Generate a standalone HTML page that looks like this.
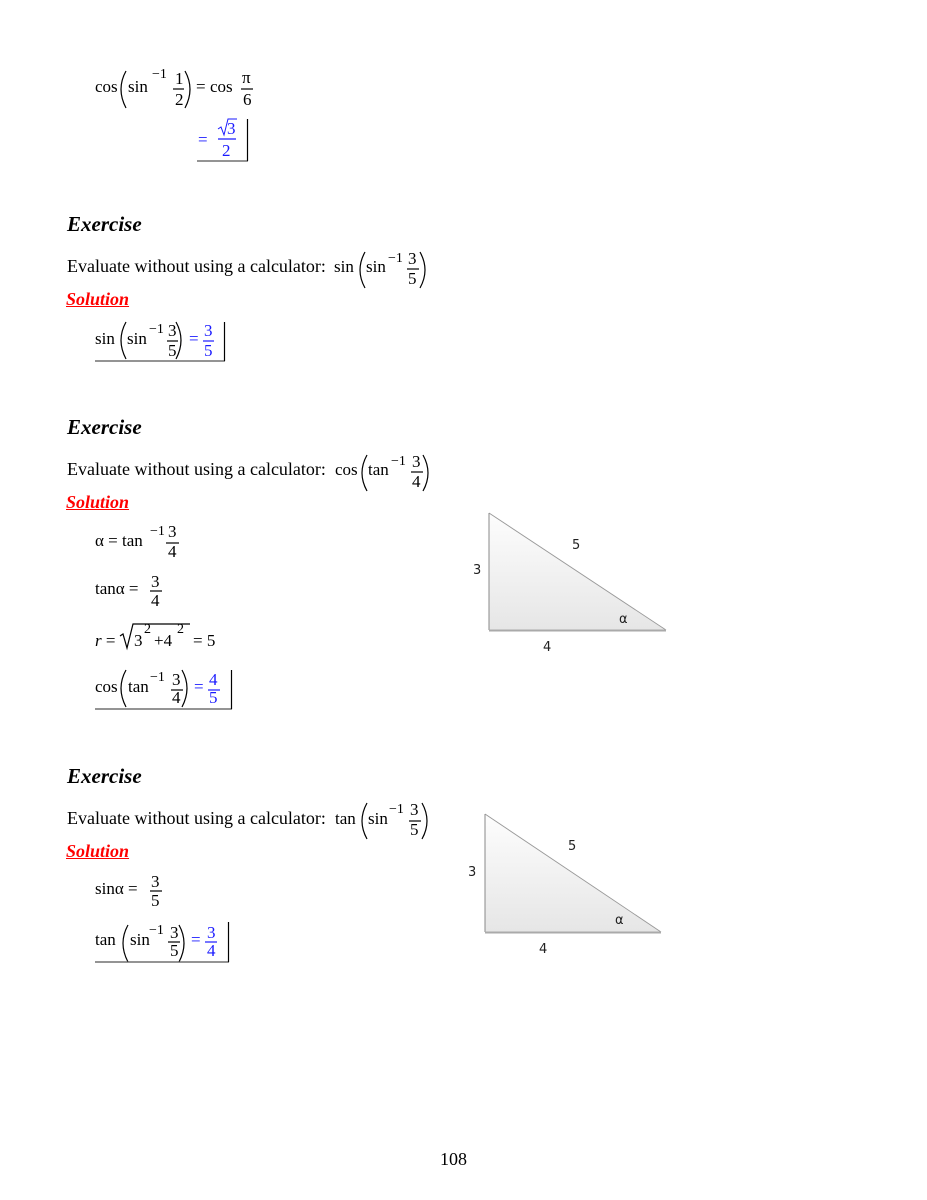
<!DOCTYPE html>
<html><head><meta charset="utf-8"><style>
html,body{margin:0;padding:0;background:#fff;}
body{width:927px;height:1200px;position:relative;overflow:hidden;font-family:"Liberation Serif",serif;color:#000;}
.t{position:absolute;font-size:17px;line-height:17px;white-space:nowrap;}
.e{position:absolute;font-size:18px;line-height:18px;white-space:nowrap;}
.s{position:absolute;font-size:14px;line-height:14px;white-space:nowrap;}
.b{color:#1a1aff;}
.h{position:absolute;font-size:21px;line-height:21px;font-weight:bold;font-style:italic;}
.sol{position:absolute;font-size:18px;line-height:18px;font-weight:bold;font-style:italic;color:#f00;text-decoration:underline;}
.l{position:absolute;font-family:"DejaVu Sans",sans-serif;font-size:13px;line-height:13px;color:#222;}
svg{position:absolute;left:0;top:0;}
</style></head><body>
<svg width="927" height="1200" fill="none" stroke="#000" stroke-width="1.2">
<path d="M126 71 Q116 89 126 108"/><path d="M185 71 Q195 89 185 108"/>
<line x1="173" y1="89" x2="184" y2="89"/><line x1="241" y1="89" x2="253" y2="89"/>
<line x1="218" y1="139" x2="236" y2="139" stroke="#1a1aff"/>
<path d="M218 129 l3 -2 l3 8 l4 -16 h9" stroke="#1a1aff" stroke-width="1"/>
<line x1="197" y1="161" x2="248" y2="161" stroke="#555"/><line x1="247.5" y1="119" x2="247.5" y2="161"/>
<path d="M365 252 Q355 270 365 288"/><path d="M420 252 Q430 270 420 288"/>
<line x1="407" y1="269" x2="419" y2="269"/>
<path d="M126 322 Q116 340 126 359"/><path d="M176 322 Q186 340 176 359"/>
<line x1="167" y1="341" x2="178" y2="341"/><line x1="203" y1="341" x2="214" y2="341" stroke="#1a1aff"/>
<line x1="95" y1="361" x2="225" y2="361" stroke="#555"/><line x1="224.5" y1="322" x2="224.5" y2="361"/>
<path d="M367 455 Q357 473 367 491"/><path d="M423 455 Q433 473 423 491"/>
<line x1="411" y1="472" x2="423" y2="472"/>
<line x1="166" y1="543" x2="179" y2="543"/><line x1="150" y1="591" x2="162" y2="591"/>
<path d="M120 636 l3 -2 l4 14 l6 -24 h57"/>
<path d="M126 670 Q116 688 126 707"/><path d="M182 670 Q192 688 182 707"/>
<line x1="171" y1="690" x2="183" y2="690"/><line x1="208" y1="690" x2="220" y2="690" stroke="#1a1aff"/>
<line x1="95" y1="709" x2="232" y2="709" stroke="#555"/><line x1="231.5" y1="670" x2="231.5" y2="709"/>
<path d="M367 803 Q357 821 367 839"/><path d="M422 803 Q432 821 422 839"/>
<line x1="409" y1="821" x2="421" y2="821"/>
<line x1="150" y1="891" x2="162" y2="891"/>
<path d="M128 925 Q118 943 128 962"/><path d="M179 925 Q189 943 179 962"/>
<line x1="168" y1="942" x2="180" y2="942"/><line x1="205" y1="942" x2="217" y2="942" stroke="#1a1aff"/>
<line x1="95" y1="962" x2="229" y2="962" stroke="#555"/><line x1="228.5" y1="922" x2="228.5" y2="962"/>
<defs><linearGradient id="g" x1="0" y1="0" x2="0" y2="1"><stop offset="0" stop-color="#fdfdfd"/><stop offset="1" stop-color="#e6e6e6"/></linearGradient></defs>
<path d="M489 513 L489 630 L666 630 Z" fill="url(#g)" stroke="none"/>
<path d="M489 513 L489 630" stroke="#888" stroke-width="1"/><path d="M489 513 L666 630" stroke="#999" stroke-width="0.9"/><path d="M489 630.5 L666 630.5" stroke="#aaa" stroke-width="2"/>
<path d="M485 814 L485 932 L661 932 Z" fill="url(#g)" stroke="none"/>
<path d="M485 814 L485 932" stroke="#888" stroke-width="1"/><path d="M485 814 L661 932" stroke="#999" stroke-width="0.9"/><path d="M485 932.5 L661 932.5" stroke="#aaa" stroke-width="2"/>
</svg>

<span class="t" style="left:95px;top:78px">cos</span>
<span class="t" style="left:128px;top:78px">sin</span>
<span class="s" style="left:152px;top:68px">&minus;1</span>
<span class="t" style="left:175px;top:70px">1</span>
<span class="t" style="left:175px;top:91px">2</span>
<span class="t" style="left:196px;top:78px">=</span>
<span class="t" style="left:210px;top:78px">cos</span>
<span class="t" style="left:242px;top:69px">&pi;</span>
<span class="t" style="left:243px;top:91px">6</span>
<span class="t b" style="left:198px;top:131px">=</span>
<span class="t b" style="left:227px;top:120px">3</span>
<span class="t b" style="left:222px;top:142px">2</span>

<div class="h" style="left:67px;top:214px">Exercise</div>
<span class="e" style="left:67px;top:257px">Evaluate without using a calculator:</span>
<span class="t" style="left:334px;top:258px">sin</span>
<span class="t" style="left:366px;top:258px">sin</span>
<span class="s" style="left:388px;top:252px">&minus;1</span>
<span class="t" style="left:408px;top:250px">3</span>
<span class="t" style="left:408px;top:270px">5</span>
<div class="sol" style="left:66px;top:290px">Solution</div>
<span class="t" style="left:95px;top:330px">sin</span>
<span class="t" style="left:127px;top:330px">sin</span>
<span class="s" style="left:149px;top:323px">&minus;1</span>
<span class="t" style="left:168px;top:322px">3</span>
<span class="t" style="left:168px;top:342px">5</span>
<span class="t b" style="left:189px;top:330px">=</span>
<span class="t b" style="left:204px;top:322px">3</span>
<span class="t b" style="left:204px;top:342px">5</span>

<div class="h" style="left:67px;top:417px">Exercise</div>
<span class="e" style="left:67px;top:460px">Evaluate without using a calculator:</span>
<span class="t" style="left:335px;top:461px">cos</span>
<span class="t" style="left:368px;top:461px">tan</span>
<span class="s" style="left:391px;top:455px">&minus;1</span>
<span class="t" style="left:412px;top:453px">3</span>
<span class="t" style="left:412px;top:473px">4</span>
<div class="sol" style="left:66px;top:493px">Solution</div>
<span class="t" style="left:95px;top:532px">&alpha; = tan</span>
<span class="s" style="left:150px;top:525px">&minus;1</span>
<span class="t" style="left:168px;top:523px">3</span>
<span class="t" style="left:168px;top:543px">4</span>
<span class="t" style="left:95px;top:580px">tan&alpha; =</span>
<span class="t" style="left:151px;top:573px">3</span>
<span class="t" style="left:151px;top:592px">4</span>
<span class="t" style="left:95px;top:632px"><i>r</i> =</span>
<span class="t" style="left:134px;top:632px">3</span>
<span class="s" style="left:144px;top:623px">2</span>
<span class="t" style="left:154px;top:632px">+4</span>
<span class="s" style="left:177px;top:623px">2</span>
<span class="t" style="left:193px;top:632px">= 5</span>
<span class="t" style="left:95px;top:678px">cos</span>
<span class="t" style="left:128px;top:678px">tan</span>
<span class="s" style="left:150px;top:671px">&minus;1</span>
<span class="t" style="left:172px;top:671px">3</span>
<span class="t" style="left:172px;top:689px">4</span>
<span class="t b" style="left:194px;top:678px">=</span>
<span class="t b" style="left:209px;top:671px">4</span>
<span class="t b" style="left:209px;top:689px">5</span>
<span class="l" style="left:572px;top:539px">5</span>
<span class="l" style="left:473px;top:564px">3</span>
<span class="l" style="left:619px;top:613px">&alpha;</span>
<span class="l" style="left:543px;top:641px">4</span>

<div class="h" style="left:67px;top:766px">Exercise</div>
<span class="e" style="left:67px;top:809px">Evaluate without using a calculator:</span>
<span class="t" style="left:335px;top:810px">tan</span>
<span class="t" style="left:368px;top:810px">sin</span>
<span class="s" style="left:389px;top:803px">&minus;1</span>
<span class="t" style="left:410px;top:801px">3</span>
<span class="t" style="left:410px;top:821px">5</span>
<div class="sol" style="left:66px;top:842px">Solution</div>
<span class="t" style="left:95px;top:880px">sin&alpha; =</span>
<span class="t" style="left:151px;top:873px">3</span>
<span class="t" style="left:151px;top:892px">5</span>
<span class="t" style="left:95px;top:931px">tan</span>
<span class="t" style="left:130px;top:931px">sin</span>
<span class="s" style="left:149px;top:924px">&minus;1</span>
<span class="t" style="left:170px;top:924px">3</span>
<span class="t" style="left:170px;top:942px">5</span>
<span class="t b" style="left:191px;top:931px">=</span>
<span class="t b" style="left:207px;top:924px">3</span>
<span class="t b" style="left:207px;top:942px">4</span>
<span class="l" style="left:568px;top:840px">5</span>
<span class="l" style="left:468px;top:866px">3</span>
<span class="l" style="left:615px;top:914px">&alpha;</span>
<span class="l" style="left:539px;top:943px">4</span>

<span class="e" style="left:440px;top:1150px">108</span>
</body></html>
